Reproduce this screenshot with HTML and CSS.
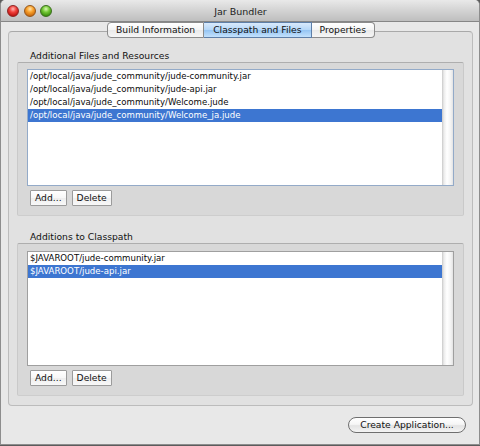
FILE: index.html
```html
<!DOCTYPE html>
<html>
<head>
<meta charset="utf-8">
<title>Jar Bundler</title>
<link rel="stylesheet" href="styles.css">
</head>
<body>
<div class="window">
  <div class="titlebar">
    <div class="lights">
      <span class="light red"></span>
      <span class="light orange"></span>
      <span class="light green"></span>
    </div>
    <div class="title">Jar Bundler</div>
  </div>
  <div class="content">
    <div class="tabs">
      <div class="tab first">Build Information</div>
      <div class="tab selected">Classpath and Files</div>
      <div class="tab last">Properties</div>
    </div>
    <div class="panel">
      <div class="group-label">Additional Files and Resources</div>
      <div class="group group-files">
        <div class="list list-focused list-files">
          <div class="rows">
            <div class="row">/opt/local/java/jude_community/jude-community.jar</div>
            <div class="row">/opt/local/java/jude_community/jude-api.jar</div>
            <div class="row">/opt/local/java/jude_community/Welcome.jude</div>
            <div class="row sel">/opt/local/java/jude_community/Welcome_ja.jude</div>
          </div>
          <div class="track"></div>
        </div>
        <div class="buttons">
          <button class="btn">Add...</button>
          <button class="btn">Delete</button>
        </div>
      </div>
      <div class="group-label second">Additions to Classpath</div>
      <div class="group group-cp">
        <div class="list list-cp">
          <div class="rows">
            <div class="row">$JAVAROOT/jude-community.jar</div>
            <div class="row sel">$JAVAROOT/jude-api.jar</div>
          </div>
          <div class="track"></div>
        </div>
        <div class="buttons">
          <button class="btn">Add...</button>
          <button class="btn">Delete</button>
        </div>
      </div>
    </div>
    <div class="footer">
      <button class="pill">Create Application...</button>
    </div>
  </div>
</div>
</body>
</html>
```
FILE: styles.css
```css
html, body {
  margin: 0;
  padding: 0;
}
body {
  width: 480px;
  height: 446px;
  background: #5c5c5c;
  font-family: "DejaVu Sans", sans-serif;
  font-size: 9.2px;
  color: #111;
  overflow: hidden;
}
.window {
  box-sizing: border-box;
  width: 480px;
  height: 445px;
  background: #e8e8e8;
  border: 1px solid #8d8d8d;
  border-top: none;
  border-radius: 5px 5px 0 0;
  display: flex;
  flex-direction: column;
}
.titlebar {
  box-sizing: border-box;
  height: 22px;
  flex: none;
  display: flex;
  align-items: center;
  background: linear-gradient(#e9e9e9, #d3d3d3 50%, #bebebe);
  border-bottom: 1px solid #868686;
  border-radius: 5px 5px 0 0;
}
.lights {
  display: flex;
  gap: 4.5px;
  padding-left: 6px;
  padding-top: 1px;
}
.light {
  display: block;
  width: 12px;
  height: 12px;
  border-radius: 50%;
  box-sizing: border-box;
}
.red {
  background: radial-gradient(circle at 50% 30%, #ffb8b4 0, #f2423d 38%, #b50d0b 85%);
  border: 1px solid #8e2523;
}
.orange {
  background: radial-gradient(circle at 50% 30%, #ffe6ae 0, #f9a12c 38%, #c2620a 85%);
  border: 1px solid #94561a;
}
.green {
  background: radial-gradient(circle at 50% 30%, #dcf9b5 0, #74c936 38%, #338508 85%);
  border: 1px solid #3b6e1e;
}
.title {
  flex: 1;
  text-align: center;
  font-size: 9.5px;
  color: #222;
  margin-left: -50px;
  padding-top: 1px;
}
.content {
  flex: 1;
  display: flex;
  flex-direction: column;
  padding: 0 6px 0 7px;
}
.tabs {
  position: relative;
  z-index: 1;
  display: flex;
  justify-content: center;
  height: 16px;
  padding-left: 1px;
}
.tab {
  box-sizing: border-box;
  height: 16px;
  line-height: 14px;
  padding: 0 8px;
  background: linear-gradient(#ffffff, #f4f4f4 50%, #e9e9e9 50%, #f6f6f6);
  border: 1px solid #8b8b8b;
  border-left: none;
  color: #111;
  white-space: nowrap;
}
.tab.first {
  border-left: 1px solid #8b8b8b;
  border-radius: 4px 0 0 4px;
}
.tab.last {
  border-radius: 0 4px 4px 0;
}
.tab.selected {
  padding: 0 9px;
  background: linear-gradient(#d9eafc, #b4d6f7 50%, #93c3f3 50%, #c3e2fd);
  border-color: #5e7fa8;
}
.panel {
  box-sizing: border-box;
  height: 375px;
  margin-top: -7px;
  background: #e1e1e1;
  border: 1px solid #bcbcbc;
  border-top-color: #a9a9a9;
  border-radius: 4px;
  padding: 17px 8px 9px 8px;
  display: flex;
  flex-direction: column;
}
.group-label {
  height: 13px;
  line-height: 13px;
  padding-left: 13px;
  color: #111;
}
.group-label.second {
  margin-top: 14px;
}
.group {
  background: #d8d8d8;
  border: 1px solid #c9c9c9;
  border-top-color: #aeaeae;
  border-bottom-color: #cdcdcd;
  border-radius: 2px;
  padding: 6px 9px 9px 9px;
}
.group-cp {
  padding-top: 7px;
}
.list {
  box-sizing: border-box;
  background: #fff;
  border: 1px solid #9f9f9f;
  display: flex;
  font-size: 8.6px;
}
.list-focused {
  border-color: #93aac8;
}
.list-files {
  height: 117px;
}
.list-cp {
  height: 115px;
}
.rows {
  flex: 1;
}
.row {
  height: 13px;
  line-height: 13px;
  padding-left: 2px;
  white-space: nowrap;
  color: #0a0a0a;
}
.row.sel {
  background: #3d76d1;
  color: #fff;
}
.track {
  width: 11px;
  flex: none;
  background: linear-gradient(to right, #c9c9c9, #ececec 2px, #ffffff 5px, #f2f2f2 9px, #e2e2e2);
}
.buttons {
  display: flex;
  gap: 5px;
  margin-top: 4px;
  padding-left: 3px;
}
.btn {
  box-sizing: border-box;
  height: 16px;
  padding: 0 4px;
  font-family: "DejaVu Sans", sans-serif;
  font-size: 9.2px;
  color: #111;
  background: linear-gradient(#ffffff, #f7f7f7 50%, #eeeeee 50%, #f8f8f8);
  border: 1px solid #9b9b9b;
  border-radius: 1px;
  line-height: 14px;
}
.footer {
  display: flex;
  justify-content: flex-end;
  padding-top: 11px;
  padding-right: 7px;
}
.pill {
  box-sizing: border-box;
  width: 118px;
  height: 16px;
  padding: 0;
  font-family: "DejaVu Sans", sans-serif;
  font-size: 9.2px;
  color: #111;
  background: linear-gradient(#ffffff, #f6f6f6 45%, #e3e3e3 55%, #f4f4f4);
  border: 1px solid #6f6f6f;
  border-radius: 8px;
  line-height: 14px;
}
```
